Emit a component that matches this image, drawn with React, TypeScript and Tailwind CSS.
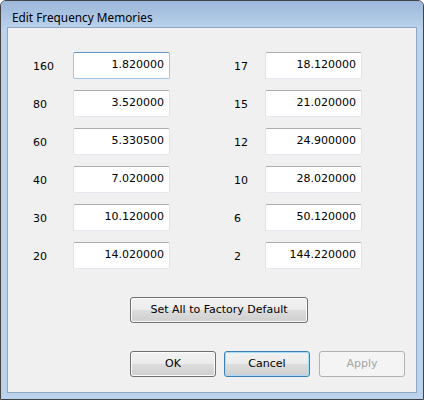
const rows: [string, string, string, string][] = [
  ["160", "1.820000", "17", "18.120000"],
  ["80", "3.520000", "15", "21.020000"],
  ["60", "5.330500", "12", "24.900000"],
  ["40", "7.020000", "10", "28.020000"],
  ["30", "10.120000", "6", "50.120000"],
  ["20", "14.020000", "2", "144.220000"],
];

function Box({ value, focused }: { value: string; focused?: boolean }) {
  return (
    <div
      className={
        focused
          ? "h-[27px] w-[97px] rounded-[2px] border border-[#9fc3e6] border-t-[#5c95c6] bg-white pr-[5px] pt-[5px] text-right leading-[13px]"
          : "h-[27px] w-[97px] rounded-[2px] border border-[#e2e3ea] border-t-[#abadb3] border-b-[#e3e9ef] bg-white pr-[5px] pt-[5px] text-right leading-[13px]"
      }
    >
      {value}
    </div>
  );
}

export default function App() {
  return (
    <div className="flex h-[400px] w-[424px] flex-col overflow-hidden rounded-t-[6px] border border-[#434343] bg-[#bad2eb] font-['DejaVu_Sans',sans-serif] text-[11px] text-black">
      <div className="h-[26px] shrink-0 bg-[linear-gradient(to_bottom,#9cb7da,#a9c3e2_50%,#b9d1ea)] pl-[11px] pt-[8px] font-['Noto_Sans',sans-serif] text-[11.8px] leading-[16px] text-black">
        Edit Frequency Memories
      </div>
      <div className="mx-[6px] h-[366px] shrink-0 border border-[#8ea7c3] bg-[#f0f0f0]">
        <div className="flex flex-col gap-[11px] pt-[24px]">
          {rows.map((r, i) => (
            <div key={i} className="flex items-start pl-[25px]">
              <div className="w-[40px] pt-[8px] leading-[13px]">{r[0]}</div>
              <Box value={r[1]} focused={i === 0} />
              <div className="ml-[64px] w-[31px] pt-[8px] leading-[13px]">{r[2]}</div>
              <Box value={r[3]} />
            </div>
          ))}
        </div>
        <div className="ml-[122px] mt-[28px] flex">
          <div className="flex h-[26px] w-[178px] items-center justify-center rounded-[3px] border border-[#707070] bg-[linear-gradient(to_bottom,#f2f2f2_0%,#ebebeb_50%,#dddddd_50%,#cfcfcf_100%)] shadow-[inset_0_0_0_1px_#fbfbfb]">
            Set All to Factory Default
          </div>
        </div>
        <div className="ml-[122px] mt-[28px] flex">
          <div className="flex h-[26px] w-[86px] items-center justify-center rounded-[3px] border border-[#707070] bg-[linear-gradient(to_bottom,#f2f2f2_0%,#ebebeb_50%,#dddddd_50%,#cfcfcf_100%)] shadow-[inset_0_0_0_1px_#fbfbfb]">
            OK
          </div>
          <div className="ml-[8px] flex h-[26px] w-[86px] items-center justify-center rounded-[3px] border border-[#3c7fb1] bg-[linear-gradient(to_bottom,#f2f2f2_0%,#ebebeb_50%,#dddddd_50%,#cfcfcf_100%)] shadow-[inset_0_0_0_1px_#a6dcf7]">
            Cancel
          </div>
          <div className="ml-[9px] flex h-[26px] w-[86px] items-center justify-center rounded-[3px] border border-[#adb2b5] bg-[#f4f4f4] text-[#a3a3a3]">
            Apply
          </div>
        </div>
      </div>
    </div>
  );
}
